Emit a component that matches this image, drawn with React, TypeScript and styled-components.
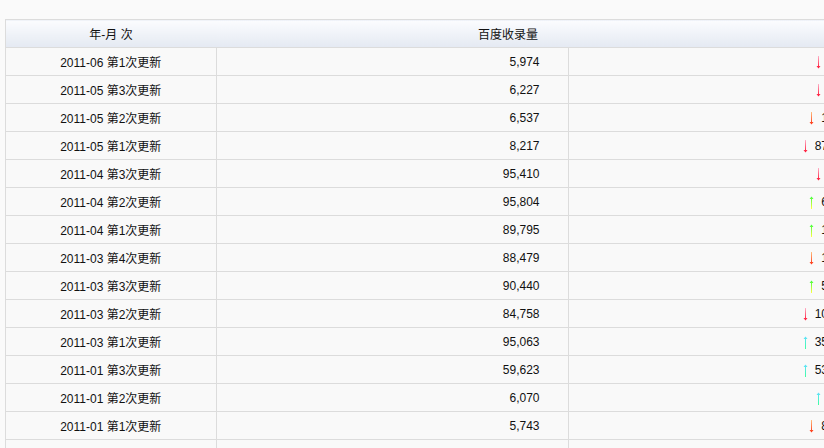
import React from "react";
import styled, { createGlobalStyle } from "styled-components";

const Global = createGlobalStyle`
  body {
    margin: 0;
    background: #fafafa;
    font-family: Arial, "Liberation Sans", "Noto Sans CJK SC", sans-serif;
    font-size: 12px;
    color: #111;
  }
`;

type Kind = "red" | "orange" | "lime" | "cyan";

const rows: [string, string, Kind, string][] = [
  ["2011-06 第1次更新", "5,974", "red", "253"],
  ["2011-05 第3次更新", "6,227", "red", "310"],
  ["2011-05 第2次更新", "6,537", "orange", "1680"],
  ["2011-05 第1次更新", "8,217", "red", "87193"],
  ["2011-04 第3次更新", "95,410", "red", "394"],
  ["2011-04 第2次更新", "95,804", "lime", "6009"],
  ["2011-04 第1次更新", "89,795", "lime", "1316"],
  ["2011-03 第4次更新", "88,479", "orange", "1961"],
  ["2011-03 第3次更新", "90,440", "lime", "5682"],
  ["2011-03 第2次更新", "84,758", "red", "10305"],
  ["2011-03 第1次更新", "95,063", "cyan", "35440"],
  ["2011-01 第3次更新", "59,623", "cyan", "53553"],
  ["2011-01 第2次更新", "6,070", "cyan", "327"],
  ["2011-01 第1次更新", "5,743", "orange", "8908"],
];

const colors: Record<Kind, [string, string]> = {
  red: ["#ffb0c8", "#ff1030"],
  orange: ["#ffc080", "#ff3010"],
  lime: ["#ffff40", "#40ff40"],
  cyan: ["#40ffa0", "#60e0ff"],
};

const Wrap = styled.div`
  padding: 19px 7px 0 5px;
  height: 448px;
  box-sizing: border-box;
  overflow: hidden;
`;

const Table = styled.table`
  width: 812px;
  table-layout: fixed;
  border-collapse: collapse;
  background: #f9f9f9;
`;

const Th = styled.th<{ $align: string; $w: number }>`
  width: ${(p) => p.$w}px;
  height: 27px;
  font-weight: normal;
  text-align: ${(p) => p.$align};
  padding: 0 30px 0 0;
  border: 1px solid #dcdcdc;
  border-left: none;
  border-right: none;
  background: linear-gradient(#fbfcfe, #e4e9f2);
  &:first-child { padding: 0; border-left: 1px solid #dcdcdc; }
  &:last-child { border-right: 1px solid #dcdcdc; }
`;

const Td = styled.td<{ $align: string; $pad: number }>`
  height: 27px;
  text-align: ${(p) => p.$align};
  padding: 0 ${(p) => p.$pad}px 0 0;
  border: 1px solid #dcdcdc;
  white-space: nowrap;
`;

const Arrow = ({ kind }: { kind: Kind }) => {
  const [a, b] = colors[kind];
  const up = kind === "lime" || kind === "cyan";
  const id = "g" + kind;
  return (
    <svg width="7" height="13" viewBox="0 0 7 13" style={{ verticalAlign: "-3px", marginRight: 6 }}>
      <defs>
        <linearGradient id={id} x1="0" y1={up ? "1" : "0"} x2="0" y2={up ? "0" : "1"}>
          <stop offset="0" stopColor={a} />
          <stop offset="1" stopColor={b} />
        </linearGradient>
      </defs>
      {up ? (
        <path d="M3 13V3H1.5L3.5 0.5L5.5 3H4V13Z" fill={`url(#${id})`} />
      ) : (
        <path d="M3 0V10H1.5L3.5 12.5L5.5 10H4V0Z" fill={`url(#${id})`} />
      )}
    </svg>
  );
};

export default function App() {
  return (
    <Wrap>
      <Global />
      <Table>
        <thead>
          <tr>
            <Th $align="center" $w={210}>年-月 次</Th>
            <Th $align="right" $w={322}>百度收录量</Th>
            <Th $align="right" $w={280}>变化</Th>
          </tr>
        </thead>
        <tbody>
          {rows.map((r) => (
            <tr key={r[0]}>
              <Td $align="center" $pad={0}>{r[0]}</Td>
              <Td $align="right" $pad={28}>{r[1]}</Td>
              <Td $align="right" $pad={30}>
                <Arrow kind={r[2]} />
                {r[3]}
              </Td>
            </tr>
          ))}
          <tr>
            <Td $align="center" $pad={0}></Td>
            <Td $align="right" $pad={28}></Td>
            <Td $align="right" $pad={30}></Td>
          </tr>
        </tbody>
      </Table>
    </Wrap>
  );
}
